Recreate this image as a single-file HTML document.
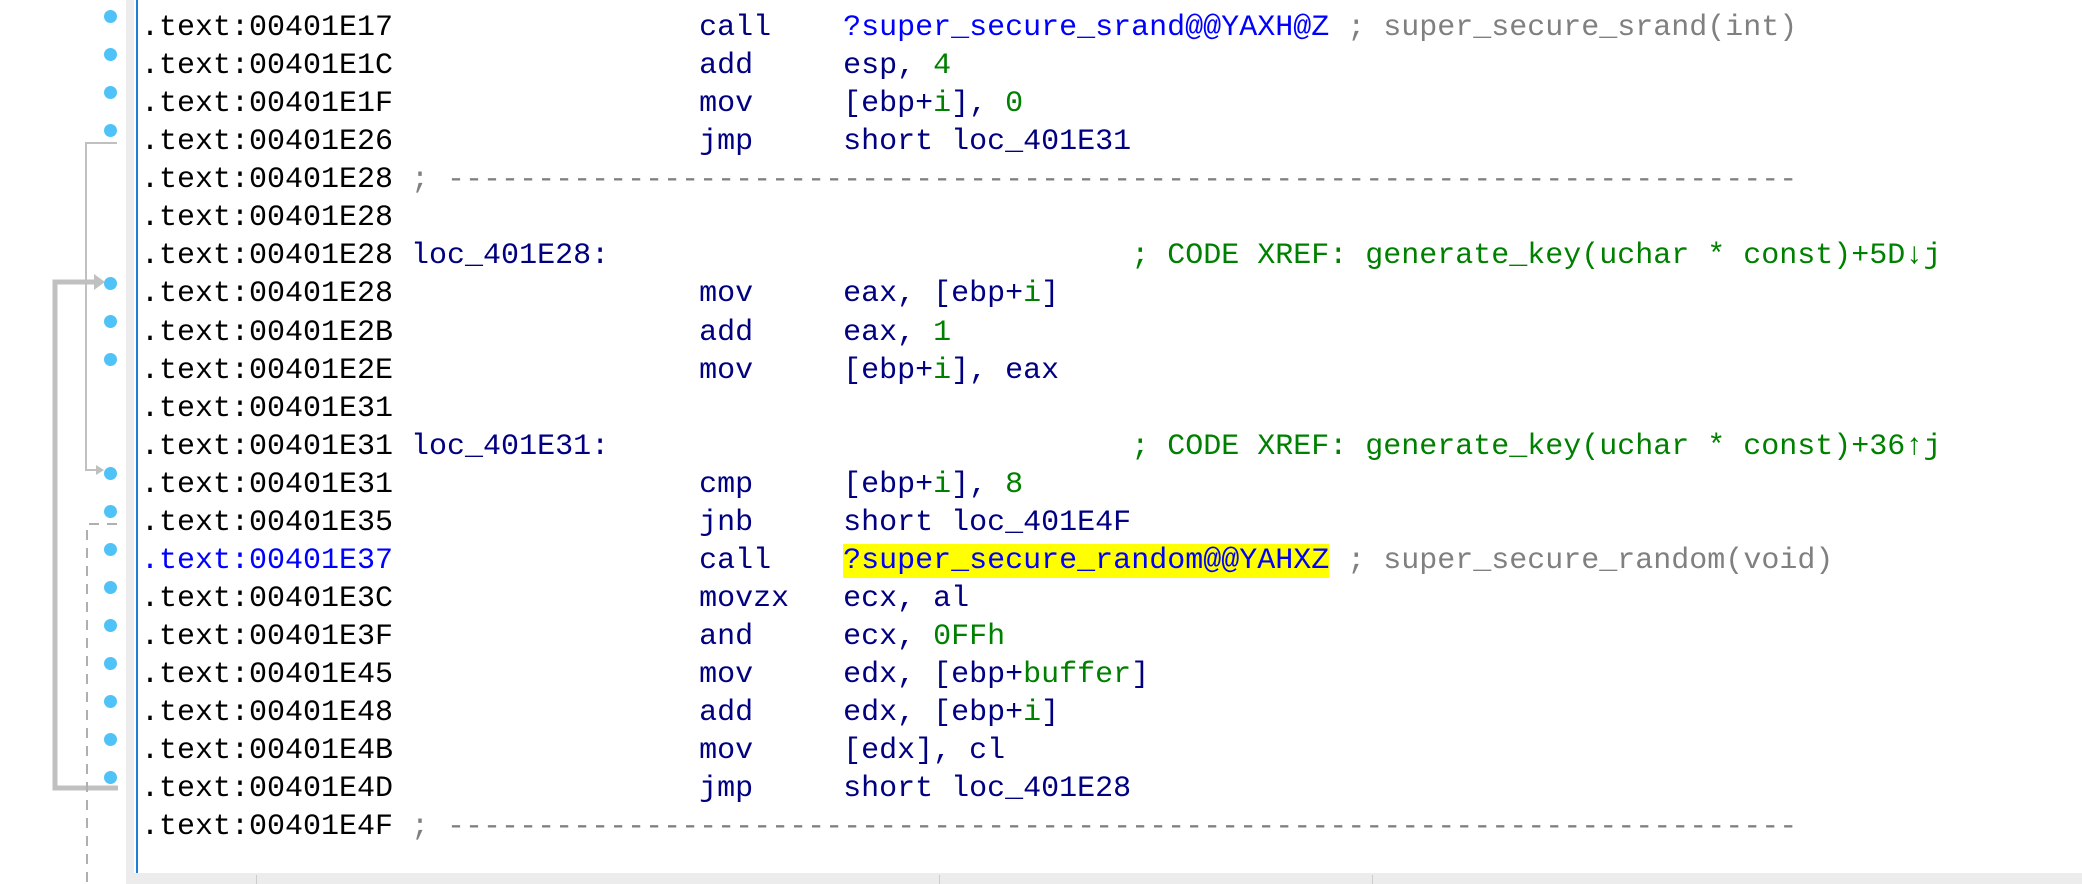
<!DOCTYPE html>
<html><head><meta charset="utf-8"><style>
html,body{margin:0;padding:0;background:#fff;width:2082px;height:884px;overflow:hidden;position:relative}
#code{position:absolute;left:141px;top:9px;margin:0;font-family:"Liberation Mono",monospace;font-size:30px;line-height:38.07px;color:#000;white-space:pre}
.n{color:#000080}.g{color:#008000}.c{color:#808080}.b{color:#0000ff}.y{background:#ffff00}
.dot{position:absolute;left:104px;width:13px;height:13px;border-radius:7px;background:#4fc3f7}
</style></head><body>
<div style="position:absolute;left:126px;top:0;width:8px;height:873px;background:#ececec"></div>
<div style="position:absolute;left:136px;top:0;width:2px;height:873px;background:#1e7fd8"></div>
<div style="position:absolute;left:126px;top:873px;width:1956px;height:11px;background:#ececec"></div>
<div style="position:absolute;left:256px;top:875px;width:1px;height:9px;background:#ccc"></div>
<div style="position:absolute;left:939px;top:875px;width:1px;height:9px;background:#ccc"></div>
<div style="position:absolute;left:1372px;top:875px;width:1px;height:9px;background:#ccc"></div>
<svg style="position:absolute;left:0;top:0" width="140" height="884">
<path d="M117 143H86V470H100" stroke="#c0c0c0" stroke-width="2" fill="none"/>
<path d="M96 465L104 470L96 475Z" fill="#c0c0c0"/>
<path d="M118 788H55V282H96" stroke="#c0c0c0" stroke-width="5" fill="none"/>
<path d="M94 274L105 282L94 290Z" fill="#c0c0c0"/>
<path d="M117 524H87V884" stroke="#b0b0b0" stroke-width="2" stroke-dasharray="10,8" fill="none"/>
</svg>
<div class="dot" style="top:10px"></div><div class="dot" style="top:48px"></div><div class="dot" style="top:86px"></div><div class="dot" style="top:124px"></div>
<div class="dot" style="top:277px"></div><div class="dot" style="top:315px"></div><div class="dot" style="top:353px"></div>
<div class="dot" style="top:467px"></div><div class="dot" style="top:505px"></div><div class="dot" style="top:543px"></div><div class="dot" style="top:581px"></div><div class="dot" style="top:619px"></div><div class="dot" style="top:657px"></div><div class="dot" style="top:695px"></div><div class="dot" style="top:733px"></div><div class="dot" style="top:771px"></div>
<pre id="code">.text:00401E17                 <span class="n">call    </span><span class="b">?super_secure_srand@@YAXH@Z</span> <span class="c">; super_secure_srand(int)</span>
.text:00401E1C                 <span class="n">add     esp, </span><span class="g">4</span>
.text:00401E1F                 <span class="n">mov     [ebp+</span><span class="g">i</span><span class="n">], </span><span class="g">0</span>
.text:00401E26                 <span class="n">jmp     short loc_401E31</span>
.text:00401E28 <span class="c">; ---------------------------------------------------------------------------</span>
.text:00401E28
.text:00401E28 <span class="n">loc_401E28:</span>                             <span class="g">; CODE XREF: generate_key(uchar * const)+5D↓j</span>
.text:00401E28                 <span class="n">mov     eax, [ebp+</span><span class="g">i</span><span class="n">]</span>
.text:00401E2B                 <span class="n">add     eax, </span><span class="g">1</span>
.text:00401E2E                 <span class="n">mov     [ebp+</span><span class="g">i</span><span class="n">], eax</span>
.text:00401E31
.text:00401E31 <span class="n">loc_401E31:</span>                             <span class="g">; CODE XREF: generate_key(uchar * const)+36↑j</span>
.text:00401E31                 <span class="n">cmp     [ebp+</span><span class="g">i</span><span class="n">], </span><span class="g">8</span>
.text:00401E35                 <span class="n">jnb     short loc_401E4F</span>
<span class="b">.text:00401E37</span>                 <span class="n">call    </span><span class="b y">?super_secure_random@@YAHXZ</span> <span class="c">; super_secure_random(void)</span>
.text:00401E3C                 <span class="n">movzx   ecx, al</span>
.text:00401E3F                 <span class="n">and     ecx, </span><span class="g">0FFh</span>
.text:00401E45                 <span class="n">mov     edx, [ebp+</span><span class="g">buffer</span><span class="n">]</span>
.text:00401E48                 <span class="n">add     edx, [ebp+</span><span class="g">i</span><span class="n">]</span>
.text:00401E4B                 <span class="n">mov     [edx], cl</span>
.text:00401E4D                 <span class="n">jmp     short loc_401E28</span>
.text:00401E4F <span class="c">; ---------------------------------------------------------------------------</span></pre>
</body></html>
